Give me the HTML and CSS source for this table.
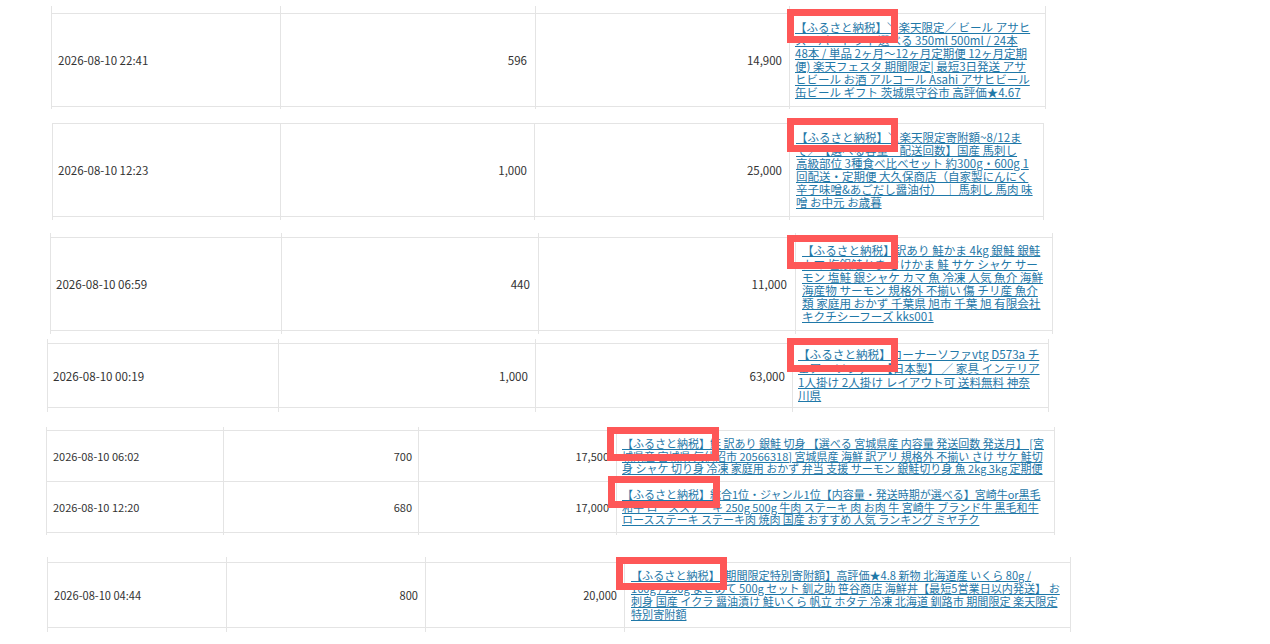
FILE: index.html
```html
<!DOCTYPE html>
<html lang="ja">
<head>
<meta charset="utf-8">
<title>ふるさと納税 履歴</title>
<link rel="stylesheet" href="styles.css">
</head>
<body>
<main class="sheet">

  <section class="frag frag-a">
    <div class="row stub stub-top"><div class="cell"></div><div class="cell"></div><div class="cell"></div><div class="cell"></div></div>
    <div class="row row-main">
      <div class="cell c-date">2026-08-10 22:41</div>
      <div class="cell c-num">596</div>
      <div class="cell c-num">14,900</div>
      <div class="cell c-link"><a href="#">【ふるさと納税】＼楽天限定／ ビール アサヒ<br>スーパードライ 選べる 350ml 500ml / 24本<br>48本 / 単品 2ヶ月〜12ヶ月定期便 12ヶ月定期<br>便) 楽天フェスタ 期間限定| 最短3日発送 アサ<br>ヒビール お酒 アルコール Asahi アサヒビール<br>缶ビール ギフト 茨城県守谷市 高評価★4.67</a><span class="mark"></span></div>
    </div>
    <div class="row stub stub-bottom"><div class="cell"></div><div class="cell"></div><div class="cell"></div><div class="cell"></div></div>
  </section>

  <section class="frag frag-b">
    <div class="row row-main">
      <div class="cell c-date">2026-08-10 12:23</div>
      <div class="cell c-num">1,000</div>
      <div class="cell c-num">25,000</div>
      <div class="cell c-link"><a href="#">【ふるさと納税】＼楽天限定寄附額~8/12ま<br>で／【選べる容量・配送回数】国産 馬刺し<br>高級部位 3種食べ比べセット 約300g・600g 1<br>回配送・定期便 大久保商店（自家製にんにく<br>辛子味噌&amp;あごだし醤油付） ｜ 馬刺し 馬肉 味<br>噌 お中元 お歳暮</a><span class="mark"></span></div>
    </div>
    <div class="row stub stub-bottom"><div class="cell"></div><div class="cell"></div><div class="cell"></div><div class="cell"></div></div>
  </section>

  <section class="frag frag-c">
    <div class="row stub stub-top"><div class="cell"></div><div class="cell"></div><div class="cell"></div><div class="cell"></div></div>
    <div class="row row-main">
      <div class="cell c-date">2026-08-10 06:59</div>
      <div class="cell c-num">440</div>
      <div class="cell c-num">11,000</div>
      <div class="cell c-link"><a href="#">【ふるさと納税】訳あり 鮭かま 4kg 銀鮭 銀鮭<br>カマ 塩銀鮭かま さけかま 鮭 サケ シャケ サー<br>モン 塩鮭 銀シャケ カマ 魚 冷凍 人気 魚介 海鮮<br>海産物 サーモン 規格外 不揃い 傷 チリ産 魚介<br>類 家庭用 おかず 千葉県 旭市 千葉 旭 有限会社<br>キクチシーフーズ kks001</a><span class="mark"></span></div>
    </div>
    <div class="row stub stub-bottom"><div class="cell"></div><div class="cell"></div><div class="cell"></div><div class="cell"></div></div>
  </section>

  <section class="frag frag-d">
    <div class="row stub stub-top"><div class="cell"></div><div class="cell"></div><div class="cell"></div><div class="cell"></div></div>
    <div class="row row-main">
      <div class="cell c-date">2026-08-10 00:19</div>
      <div class="cell c-num">1,000</div>
      <div class="cell c-num">63,000</div>
      <div class="cell c-link"><a href="#">【ふるさと納税】コーナーソファvtg D573a チ<br>ェアー ソファー【日本製】 ／ 家具 インテリア<br>1人掛け 2人掛け レイアウト可 送料無料 神奈<br>川県</a><span class="mark"></span></div>
    </div>
    <div class="row stub stub-bottom"><div class="cell"></div><div class="cell"></div><div class="cell"></div><div class="cell"></div></div>
  </section>

  <section class="frag frag-e">
    <div class="row stub stub-top"><div class="cell"></div><div class="cell"></div><div class="cell"></div><div class="cell"></div></div>
    <div class="row row-main">
      <div class="cell c-date">2026-08-10 06:02</div>
      <div class="cell c-num">700</div>
      <div class="cell c-num">17,500</div>
      <div class="cell c-link"><a href="#">【ふるさと納税】鮭 訳あり 銀鮭 切身 【選べる 宮城県産 内容量 発送回数 発送月】 [宮<br>城県産 宮城県 気仙沼市 20566318] 宮城県産 海鮮 訳アリ 規格外 不揃い さけ サケ 鮭切<br>身 シャケ 切り身 冷凍 家庭用 おかず 弁当 支援 サーモン 銀鮭切り身 魚 2kg 3kg 定期便</a><span class="mark"></span></div>
    </div>
    <div class="row row-main row-next">
      <div class="cell c-date">2026-08-10 12:20</div>
      <div class="cell c-num">680</div>
      <div class="cell c-num">17,000</div>
      <div class="cell c-link"><a href="#">【ふるさと納税】総合1位・ジャンル1位【内容量・発送時期が選べる】宮崎牛or黒毛<br>和牛 ロースステーキ 250g 500g 牛肉 ステーキ 肉 お肉 牛 宮崎牛 ブランド牛 黒毛和牛<br>ロースステーキ ステーキ肉 焼肉 国産 おすすめ 人気 ランキング ミヤチク</a><span class="mark"></span></div>
    </div>
    <div class="row stub stub-bottom"><div class="cell"></div><div class="cell"></div><div class="cell"></div><div class="cell"></div></div>
  </section>

  <section class="frag frag-f">
    <div class="row stub stub-top"><div class="cell"></div><div class="cell"></div><div class="cell"></div><div class="cell"></div></div>
    <div class="row row-main">
      <div class="cell c-date">2026-08-10 04:44</div>
      <div class="cell c-num">800</div>
      <div class="cell c-num">20,000</div>
      <div class="cell c-link"><a href="#">【ふるさと納税】【期間限定特別寄附額】高評価★4.8 新物 北海道産 いくら 80g /<br>160g / 250g まとめて 500g セット 釧之助 笹谷商店 海鮮丼【最短5営業日以内発送】 お<br>刺身 国産 イクラ 醤油漬け 鮭いくら 帆立 ホタテ 冷凍 北海道 釧路市 期間限定 楽天限定<br>特別寄附額</a><span class="mark"></span></div>
    </div>
    <div class="row stub stub-bottom"><div class="cell"></div><div class="cell"></div><div class="cell"></div><div class="cell"></div></div>
  </section>

</main>
</body>
</html>
```
FILE: styles.css
```css
html, body {
  margin: 0;
  padding: 0;
  background: #ffffff;
}

body {
  font-family: "Noto Sans CJK JP", "Noto Sans", sans-serif;
  color: #333333;
  overflow: hidden;
}

.sheet {
  display: flex;
  flex-direction: column;
  align-items: flex-start;
}

.frag {
  display: flex;
  flex-direction: column;
}

.row {
  display: grid;
  box-sizing: border-box;
}

.row-main {
  border-top: 1px solid #e4e4e4;
  border-bottom: 1px solid #e4e4e4;
}

.row-next {
  border-top: none;
}

.cell {
  box-sizing: border-box;
  border-left: 1px solid #e4e4e4;
  display: flex;
  align-items: center;
  min-width: 0;
}

.cell:last-child {
  border-right: 1px solid #e4e4e4;
}

.c-date {
  white-space: nowrap;
}

.c-num {
  justify-content: flex-end;
  white-space: nowrap;
}

.c-link {
  position: relative;
}

.c-link a {
  color: #1f78a8;
  text-decoration: underline;
  white-space: nowrap;
}

.mark {
  position: absolute;
  box-sizing: border-box;
  border: 7px solid #fe5757;
  width: 111px;
  height: 34px;
}

/* ---------- fragment A ---------- */
.frag-a { margin: 6px 0 0 51px; font-size: 11.5px; }
.frag-a .row { grid-template-columns: 229px 255px 254px 257px; }
.frag-a .stub-top { height: 7px; }
.frag-a .row-main { height: 94px; }
.frag-a .stub-bottom { height: 2px; }
.frag-a .c-date { padding-left: 6px; }
.frag-a .c-num { padding-right: 8px; }
.frag-a .c-num + .c-num { padding-right: 7px; }
.frag-a .c-link { padding-left: 5px; line-height: 13.1px; }
.frag-a .mark { left: -3px; top: -5px; }

/* ---------- fragment B ---------- */
.frag-b { margin: 14px 0 0 52px; font-size: 11.5px; }
.frag-b .row { grid-template-columns: 228px 254px 255px 255px; }
.frag-b .row-main { height: 94px; }
.frag-b .stub-bottom { height: 3px; }
.frag-b .c-date { padding-left: 5px; }
.frag-b .c-num { padding-right: 7px; }
.frag-b .c-link { padding-left: 6px; line-height: 13.1px; }
.frag-b .mark { left: -3px; top: -6px; }

/* ---------- fragment C ---------- */
.frag-c { margin: 13px 0 0 50px; font-size: 11.6px; }
.frag-c .row { grid-template-columns: 231px 257px 257px 258px; }
.frag-c .stub-top { height: 4px; }
.frag-c .row-main { height: 94px; }
.frag-c .stub-bottom { height: 3px; }
.frag-c .c-date { padding-left: 5px; }
.frag-c .c-num { padding-right: 8px; }
.frag-c .c-link { padding-left: 6px; line-height: 13.2px; }
.frag-c .mark { left: -9px; top: -3px; }

/* ---------- fragment D ---------- */
.frag-d { margin: 5px 0 0 47px; font-size: 11.6px; }
.frag-d .row { grid-template-columns: 231px 257px 257px 257px; }
.frag-d .stub-top { height: 4px; }
.frag-d .row-main { height: 65px; }
.frag-d .stub-bottom { height: 4px; }
.frag-d .c-date { padding-left: 5px; }
.frag-d .c-num { padding-right: 7px; }
.frag-d .c-link { padding-left: 5px; line-height: 13.6px; }
.frag-d .mark { left: -6px; top: -6px; }

/* ---------- fragment E ---------- */
.frag-e { margin: 15px 0 0 46px; font-size: 11px; }
.frag-e .row { grid-template-columns: 177px 195px 198px 439px; }
.frag-e .stub-top { height: 3px; }
.frag-e .row-main { height: 52px; }
.frag-e .row-next { height: 51px; }
.frag-e .stub-bottom { height: 2px; }
.frag-e .c-date { padding-left: 6px; }
.frag-e .c-num { padding-right: 6px; }
.frag-e .c-num + .c-num { padding-right: 7px; }
.frag-e .c-link { padding-left: 5px; line-height: 12.7px; }
.frag-e .mark { left: -10px; top: -4px; width: 112px; height: 34px; }
.frag-e .row-next .mark { left: -9px; top: -6px; height: 32px; }

/* ---------- fragment F ---------- */
.frag-f { margin: 22px 0 0 47px; font-size: 11.1px; }
.frag-f .row { grid-template-columns: 179px 199px 199px 447px; }
.frag-f .stub-top { height: 5px; }
.frag-f .row-main { height: 66px; }
.frag-f .stub-bottom { height: 4px; }
.frag-f .c-date { padding-left: 6px; }
.frag-f .c-num { padding-right: 7px; }
.frag-f .c-link { padding-left: 6px; line-height: 12.8px; }
.frag-f .mark { left: -9px; top: -6px; height: 33px; }
```
